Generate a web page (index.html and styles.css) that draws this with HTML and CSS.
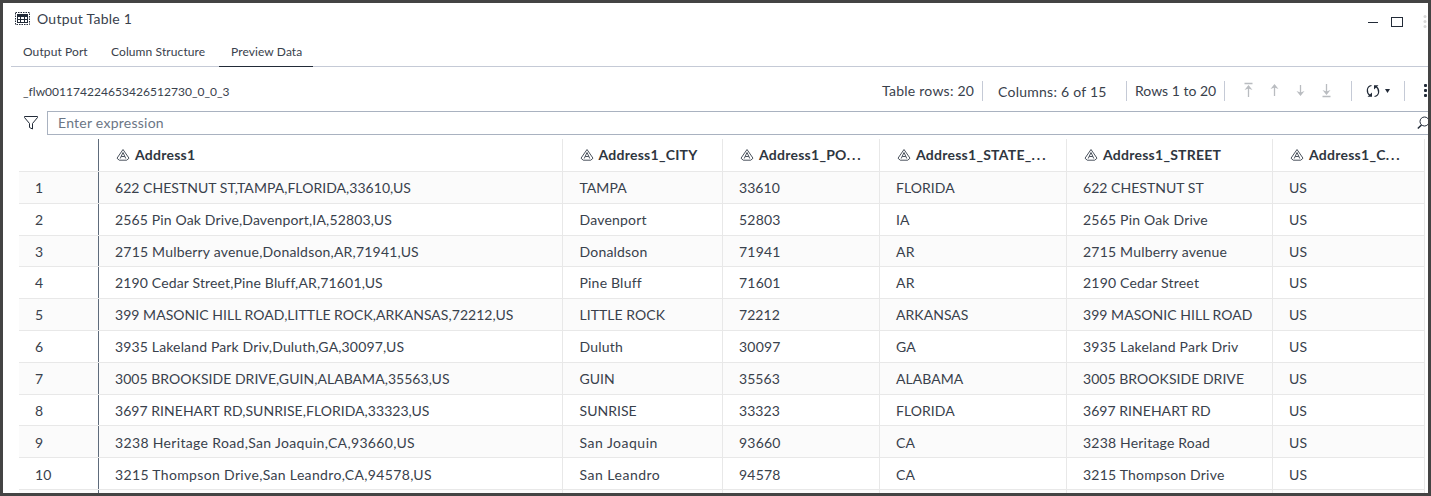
FILE: index.html
```html
<!DOCTYPE html>
<html lang="en">
<head>
<meta charset="utf-8">
<title>Output Table 1</title>
<link rel="stylesheet" href="styles.css">
</head>
<body>
<svg width="0" height="0" class="defs">
  <symbol id="char" viewBox="0 0 14 14"><path d="M7 1.500 1 10.200 3.200 12.200H10.800L13 10.200Z M4.200 10.500 7 4.500 9.800 10.500 M5.200 8.500H8.800" fill="none" stroke="#4a525d" stroke-width="1"/></symbol>
</svg>
<main class="window">
  <header class="title">
    <svg class="table-icon" width="15" height="14" viewBox="0 0 15 14"><rect x=".5" y=".5" width="14" height="12" fill="none" stroke="#222b38" stroke-dasharray="1.500 1"/><path d="M2 2H13V11H2Z" fill="#222b38"/><path d="M3 5h2v2H3zM6 5h3v2H6zM10 5h2v2H10zM3 8h2v2H3zM6 8h3v2H6zM10 8h2v2H10z" fill="#fff"/></svg>
    <h1>Output Table 1</h1>
    <svg class="window-icons" width="60" height="20" viewBox="0 0 60 20"><path d="M0 10.500H10" stroke="#222b38"/><rect x="23.500" y="5.500" width="11" height="9" fill="none" stroke="#222b38"/><g fill="#d8d8d8"><circle cx="57" cy="4.500" r="1.500"/><circle cx="57" cy="9.500" r="1.500"/><circle cx="57" cy="14.500" r="1.500"/></g></svg>
  </header>
  <nav class="tabs"><a class="t1">Output Port</a><a class="t2">Column Structure</a><a class="t3 active">Preview Data</a></nav>
  <section class="toolbar">
    <span class="name">_flw001174224653426512730_0_0_3</span>
    <span class="stat s1">Table rows: 20</span><span class="stat s2">Columns: 6 of 15</span><span class="stat s3">Rows 1 to 20</span>
    <div class="pager">
      <svg width="12" height="16" viewBox="0 0 12 16"><path d="M1.500 1.500H9.500M5.500 15V5"/><path class="tip" d="M1.500 8 5.500 3 9.500 8 5.500 6.500Z"/></svg>
      <svg width="12" height="16" viewBox="0 0 12 16"><path d="M5.500 14V4"/><path class="tip" d="M1.500 7 5.500 2 9.500 7 5.500 5.500Z"/></svg>
      <svg width="12" height="16" viewBox="0 0 12 16"><path d="M5.500 3V12"/><path class="tip" d="M1.500 9 5.500 14 9.500 9 5.500 10.500Z"/></svg>
      <svg width="12" height="16" viewBox="0 0 12 16"><path d="M1.500 14.500H9.500M5.500 2V11"/><path class="tip" d="M1.500 8 5.500 13 9.500 8 5.500 9.500Z"/></svg>
    </div>
    <div class="refresh"><svg width="28" height="16" viewBox="0 0 28 16"><g fill="none" stroke="#222b38" stroke-width="1.200"><path d="M5.500 2.500C.5 3.500 0 9.500 4 12.500M8.500 13.500C13.500 12.500 14 6.500 10 3.500"/></g><path d="M1.500 13.800H6V9.500ZM12.500 2.200H8V6.500ZM19 6H24L21.500 10Z" fill="#222b38"/></svg></div>
    <svg class="more" width="4" height="16" viewBox="0 0 4 16" fill="#222b38"><rect x="1" y="1" width="3" height="3" rx="1"/><rect x="1" y="6" width="3" height="3" rx="1"/><rect x="1" y="11" width="3" height="3" rx="1"/></svg>
  </section>
  <section class="filter">
    <svg class="funnel" width="16" height="16" viewBox="0 0 16 16"><path d="M1.500 1.500H14.500V2.500L9.500 8.500V14L6.500 12.500V8.500L1.500 2.500Z" fill="none" stroke="#222b38"/></svg>
    <div class="field"><span>Enter expression</span><svg width="11" height="16" viewBox="0 0 11 16"><circle cx="7.500" cy="7.500" r="4.500" fill="none" stroke="#222b38"/><path d="M4.500 11 .8 14.500" stroke="#222b38" stroke-width="1.500"/></svg></div>
  </section>
  <div class="grid">
    <div class="row head"><b></b><b><svg><use href="#char"/></svg>Address1</b><b><svg><use href="#char"/></svg>Address1_CITY</b><b><svg><use href="#char"/></svg>Address1_PO<span>...</span></b><b><svg><use href="#char"/></svg>Address1_STATE_<span>...</span></b><b><svg><use href="#char"/></svg>Address1_STREET</b><b><svg><use href="#char"/></svg>Address1_C<span>...</span></b></div>
    <div class="row caps"><i>1</i><i>622 CHESTNUT ST,TAMPA,FLORIDA,33610,US</i><i>TAMPA</i><i>33610</i><i>FLORIDA</i><i>622 CHESTNUT ST</i><i>US</i></div>
    <div class="row mixed"><i>2</i><i>2565 Pin Oak Drive,Davenport,IA,52803,US</i><i>Davenport</i><i>52803</i><i>IA</i><i>2565 Pin Oak Drive</i><i>US</i></div>
    <div class="row"><i>3</i><i>2715 Mulberry avenue,Donaldson,AR,71941,US</i><i>Donaldson</i><i>71941</i><i>AR</i><i>2715 Mulberry avenue</i><i>US</i></div>
    <div class="row mixed"><i>4</i><i>2190 Cedar Street,Pine Bluff,AR,71601,US</i><i>Pine Bluff</i><i>71601</i><i>AR</i><i>2190 Cedar Street</i><i>US</i></div>
    <div class="row caps"><i>5</i><i>399 MASONIC HILL ROAD,LITTLE ROCK,ARKANSAS,72212,US</i><i>LITTLE ROCK</i><i>72212</i><i>ARKANSAS</i><i>399 MASONIC HILL ROAD</i><i>US</i></div>
    <div class="row mixed"><i>6</i><i>3935 Lakeland Park Driv,Duluth,GA,30097,US</i><i>Duluth</i><i>30097</i><i>GA</i><i>3935 Lakeland Park Driv</i><i>US</i></div>
    <div class="row caps"><i>7</i><i>3005 BROOKSIDE DRIVE,GUIN,ALABAMA,35563,US</i><i>GUIN</i><i>35563</i><i>ALABAMA</i><i>3005 BROOKSIDE DRIVE</i><i>US</i></div>
    <div class="row caps"><i>8</i><i>3697 RINEHART RD,SUNRISE,FLORIDA,33323,US</i><i>SUNRISE</i><i>33323</i><i>FLORIDA</i><i>3697 RINEHART RD</i><i>US</i></div>
    <div class="row wide"><i>9</i><i>3238 Heritage Road,San Joaquin,CA,93660,US</i><i>San Joaquin</i><i>93660</i><i>CA</i><i>3238 Heritage Road</i><i>US</i></div>
    <div class="row wide"><i>10</i><i>3215 Thompson Drive,San Leandro,CA,94578,US</i><i>San Leandro</i><i>94578</i><i>CA</i><i>3215 Thompson Drive</i><i>US</i></div>
    <div class="row"><i></i><i></i><i></i><i></i><i></i><i></i><i></i></div>
  </div>
</main>
</body>
</html>
```
FILE: styles.css
```css
* { box-sizing: border-box; }
body { margin: 0; font-family: Lato, sans-serif; font-size: 14px; color: #39414c; }
.defs { display: block; height: 0; }
.window { width: 1431px; height: 496px; border: 3px solid #444; background: #fff; overflow: hidden; }
.title { display: flex; align-items: center; height: 34px; padding: 0 0 3px 12px; }
.title h1 { margin: 0 0 0 7px; font-size: 14px; line-height: 17px; font-weight: 400; letter-spacing: .25px; flex: 1; }
.window-icons { margin: 6px 0 0; }
.tabs { display: flex; height: 30px; margin-left: 8px; border-bottom: 1px solid #c5cad6; font-size: 12px; letter-spacing: .1px; }
.tabs a { height: 30px; line-height: 30px; padding: 0 12px; white-space: nowrap; border-bottom: 1px solid transparent; }
.t1 { width: 88px; }
.t2 { width: 120px; }
.t3 { width: 94px; }
.tabs .active { border-bottom-color: #222b38; }
.toolbar { display: flex; align-items: center; height: 44px; padding: 4px 0 0 20px; white-space: nowrap; }
.name { width: 859px; font-size: 12px; letter-spacing: .03px; padding-top: 1px; }
.stat { height: 20px; line-height: 19px; border-right: 1px solid #c5cad6; letter-spacing: .25px; }
.s1 { width: 101px; }
.s2 { width: 144px; padding: 1px 0 0 15px; }
.s3 { width: 98px; padding-left: 8px; letter-spacing: 0; }
.pager { display: flex; gap: 14px; width: 127px; height: 20px; padding: 1px 0 0 18px; border-right: 1px solid #c5cad6; fill: none; stroke: #b9bcc0; stroke-width: 1.3; }
.tip { fill: #b9bcc0; stroke: none; }
.refresh { width: 53px; height: 20px; padding: 2px 0 0 14px; border-right: 1px solid #c5cad6; }
.more { margin-left: 18px; flex: none; }
.filter { display: flex; height: 24px; padding-left: 20px; }
.funnel { margin: 4px 8px 0 0; }
.field { display: flex; flex: 1; justify-content: space-between; align-items: center; padding: 0 0 2px 10px; border: 1px solid #a9b2c0; border-right: 0; color: #6b7685; letter-spacing: .25px; }
.grid { width: 1407px; margin: 4px 0 0 15px; padding-left: 1px; }
.row { display: grid; grid-template-columns: 80px 464px 160px 157px 187px 206px 152px; height: 31.8px; border-bottom: 1px solid #e8e8e8; }
.row:nth-child(even) { background: #fbfbfb; }
.row > * { display: flex; align-items: center; font-style: normal; padding: 1px 0 0 16px; border-right: 1px solid #e8e8e8; white-space: nowrap; overflow: hidden; letter-spacing: .2px; }
.row > :first-child { border-right-color: #5e6b7b; }
.row > :nth-child(3) { padding-left: 16.5px; }
.row:nth-child(5) > *, .row:nth-child(6) > * { padding-top: 0; }
.caps > * { letter-spacing: .04px; }
.mixed > :nth-child(2) { letter-spacing: .15px; }
.wide > :nth-child(2) { letter-spacing: .34px; }
.wide > :nth-child(3) { letter-spacing: .5px; }
.head { height: 33px; }
.head b { font-weight: 700; padding: 0 0 1px 17px; letter-spacing: .25px; color: #2f3640; }
.head span { letter-spacing: 2px; }
.head svg { width: 14px; height: 14px; margin-right: 5px; flex: none; }
```
